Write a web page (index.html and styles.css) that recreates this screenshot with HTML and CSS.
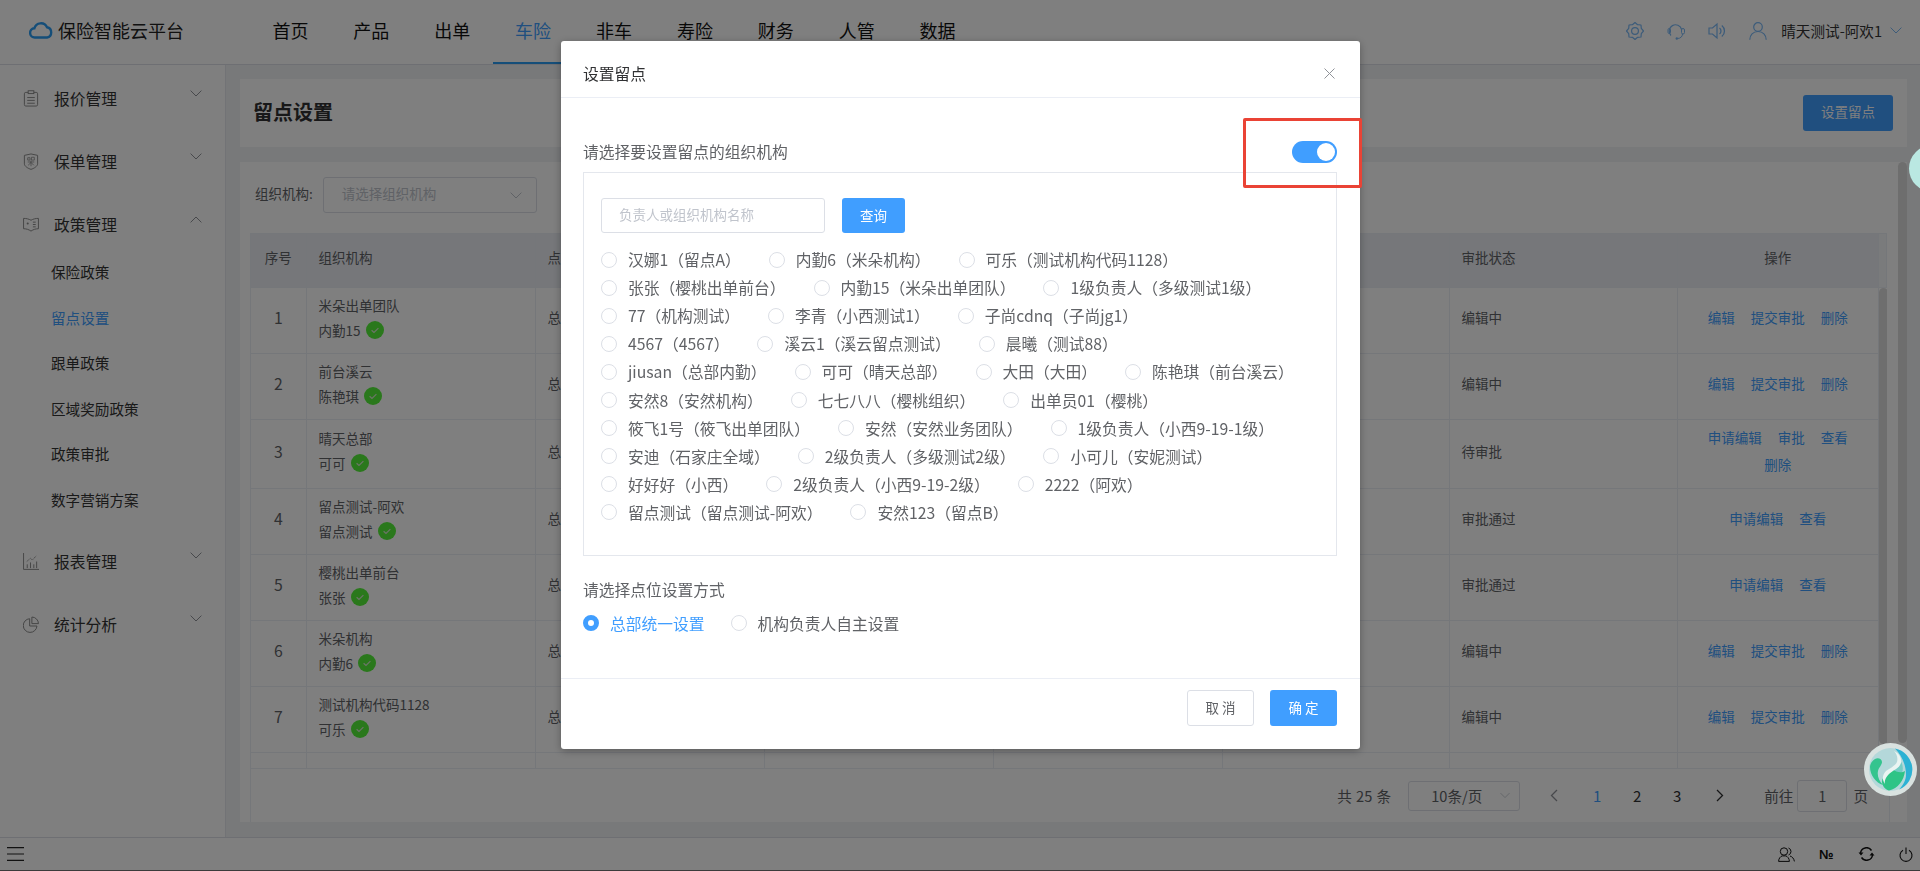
FILE: index.html
```html
<!DOCTYPE html>
<html lang="zh-CN">
<head>
  <meta charset="UTF-8" />
  <title>保险智能云平台 - 留点设置</title>
  <link rel="stylesheet" href="styles.css">
</head>
<body>
  <svg class="defs" width="0" height="0">
    <symbol id="ok" viewBox="0 0 18 18">
      <circle cx="9" cy="9" r="9" fill="#54f038"/>
      <path d="M5.600 9.200l2.400 2.300 4.400-4.400" fill="none" stroke="#d8e8d0" stroke-width="1.200"/>
    </symbol>
    <symbol id="chev" viewBox="0 0 12 7">
      <path d="M.6.6L6 6l5.400-5.400" fill="none" stroke="currentColor" stroke-width="1"/>
    </symbol>
  </svg>

  <header class="topbar">
    <div class="logo">
      <svg width="24" height="18" viewBox="0 0 24 18"><path d="M6 16.500a4.600 4.600 0 0 1-.6-9.200 6.700 6.700 0 0 1 12.600-1 5.200 5.200 0 0 1 0 10.200z" fill="none" stroke="#2b9cf2" stroke-width="2.400"/></svg>
      <span>保险智能云平台</span>
    </div>
    <nav class="nav">
      <a>首页</a><a>产品</a><a>出单</a><a class="active">车险</a><a>非车</a><a>寿险</a><a>财务</a><a>人管</a><a>数据</a>
    </nav>
    <div class="top-right">
      <svg class="top-icon" viewBox="0 0 18 18"><path d="M17.500 9L15.280 11.600 15 15 11.600 15.280 9 17.500 6.400 15.280 3 15 2.720 11.600 .5 9 2.720 6.400 3 3 6.400 2.720 9 .5 11.600 2.720 15 3 15.280 6.400z" fill="none" stroke="currentColor" stroke-width="1.200" stroke-linejoin="round"/><circle cx="9" cy="9" r="3.400" fill="none" stroke="currentColor" stroke-width="1.200"/></svg>
      <svg class="top-icon" viewBox="0 0 18 18"><path d="M4 13.500A6.300 6.300 0 1 1 14.600 7.500" fill="none" stroke="currentColor" stroke-width="1.200"/><rect x="1" y="6.500" width="2.500" height="5" rx="1.200" fill="none" stroke="currentColor"/><rect x="14.500" y="6.500" width="3" height="5.500" rx="1.500" fill="none" stroke="currentColor"/><path d="M15.500 12c0 2.500-2 4.500-5 4.500" fill="none" stroke="currentColor"/><circle cx="9.800" cy="16.500" r="1.200" fill="currentColor"/></svg>
      <svg class="top-icon" viewBox="0 0 18 18"><path d="M1 6h3.500L9 2v14l-4.500-4H1z" fill="none" stroke="currentColor" stroke-width="1.200"/><path d="M11.500 6a3.800 3.800 0 0 1 0 6M13.800 3.500a7 7 0 0 1 0 11" fill="none" stroke="currentColor" stroke-width="1.300"/></svg>
      <svg class="top-icon" viewBox="0 0 18 18"><circle cx="9" cy="5" r="4.300" fill="none" stroke="currentColor" stroke-width="1.200"/><path d="M.8 17.800c0-4.800 3.200-8.300 8.200-8.300s8.200 3.500 8.200 8.300" fill="none" stroke="currentColor" stroke-width="1.200"/></svg>
      <span class="user-name">晴天测试-阿欢1</span>
      <svg class="chev user-chev"><use href="#chev"/></svg>
    </div>
  </header>

  <div class="layout">
    <aside class="sidebar">
      <div class="menu-group">
        <div class="menu-head">
          <svg class="menu-icon" viewBox="0 0 16 18"><rect x="1" y="2.500" width="14" height="14.500" rx="1.500" fill="none" stroke="currentColor"/><rect x="5" y=".8" width="6" height="3" fill="#fff" stroke="currentColor"/><path d="M4 8h8M4 11h8M4 14h8" stroke="currentColor"/></svg>
          <span>报价管理</span>
          <svg class="chev"><use href="#chev"/></svg>
        </div>
      </div>
      <div class="menu-group">
        <div class="menu-head">
          <svg class="menu-icon" viewBox="0 0 16 18"><path d="M1 2.500L8 1l7 1.500v9c0 2.500-4 5-7 5.800-3-.8-7-3.300-7-5.800z" fill="none" stroke="currentColor"/><path d="M4.500 5h2.500v2.500H4.500zM8.500 4.500h3v3h-3zM4.500 9.500h7M8 8v6M8 10l-3 3M8 10l3 3" fill="none" stroke="currentColor" stroke-width=".8"/></svg>
          <span>保单管理</span>
          <svg class="chev"><use href="#chev"/></svg>
        </div>
      </div>
      <div class="menu-group">
        <div class="menu-head">
          <svg class="menu-icon" viewBox="0 0 17 16"><path d="M.6 1.500c3 0 5.500.6 7.900 2 2.400-1.400 4.900-2 7.900-2v11c-3 0-5.400.8-7.900 2.500C6 13.300 3.600 12.500.6 12.500z" fill="none" stroke="currentColor"/><circle cx="5" cy="7" r="1.100" fill="currentColor"/><path d="M10.500 5.500h3M10.500 8h3M10.500 10.500h3" stroke="currentColor"/></svg>
          <span>政策管理</span>
          <svg class="chev up"><use href="#chev"/></svg>
        </div>
        <a class="menu-sub">保险政策</a>
        <a class="menu-sub active">留点设置</a>
        <a class="menu-sub">跟单政策</a>
        <a class="menu-sub">区域奖励政策</a>
        <a class="menu-sub">政策审批</a>
        <a class="menu-sub">数字营销方案</a>
      </div>
      <div class="menu-group">
        <div class="menu-head">
          <svg class="menu-icon" viewBox="0 0 17 18"><path d="M.6 0v17.400H17" fill="none" stroke="currentColor"/><path d="M4 9l4-3.500 2 2L14 3" fill="none" stroke="currentColor" stroke-width=".9" stroke-dasharray="1.500 .7"/><path d="M4.500 12v4M8 10v6M11.500 12v4M14.500 9v7" stroke="currentColor"/></svg>
          <span>报表管理</span>
          <svg class="chev"><use href="#chev"/></svg>
        </div>
      </div>
      <div class="menu-group">
        <div class="menu-head">
          <svg class="menu-icon" viewBox="0 0 18 18"><path d="M7.500 2.500a7.700 7.700 0 1 0 8.200 8.200H7.500z" fill="none" stroke="currentColor" stroke-width="1.100"/><path d="M10 .6a7.500 7.500 0 0 1 7.400 7.400H10z" fill="none" stroke="currentColor" stroke-width="1.100"/></svg>
          <span>统计分析</span>
          <svg class="chev"><use href="#chev"/></svg>
        </div>
      </div>
    </aside>

    <main class="main">
      <section class="title-card">
        <h2>留点设置</h2>
        <button class="btn-primary">设置留点</button>
      </section>

      <section class="list-card">
        <div class="filter">
          <label>组织机构:</label>
          <div class="select"><span>请选择组织机构</span><svg class="chev"><use href="#chev"/></svg></div>
        </div>

        <div class="table-box">
          <table class="table head-table">
            <colgroup><col class="c1"><col class="c2"><col class="c3"><col class="c4"><col class="c5"><col class="c6"><col class="c7"><col class="c8"><col class="c9"></colgroup>
            <tr>
              <th class="center">序号</th><th>组织机构</th><th>点位设置方式</th><th></th><th></th><th></th><th>审批状态</th><th class="center">操作</th><th class="gutter"></th>
            </tr>
          </table>
          <div class="table-scroll">
            <table class="table">
              <colgroup><col class="c1"><col class="c2"><col class="c3"><col class="c4"><col class="c5"><col class="c6"><col class="c7"><col class="c8"></colgroup>
              <tr>
                <td class="center num">1</td>
                <td><div>米朵出单团队</div><div>内勤15<svg class="ok"><use href="#ok"/></svg></div></td>
                <td>总部统一设置</td><td></td><td></td><td></td><td>编辑中</td>
                <td class="center"><a>编辑</a><a>提交审批</a><a>删除</a></td>
              </tr>
              <tr>
                <td class="center num">2</td>
                <td><div>前台溪云</div><div>陈艳琪<svg class="ok"><use href="#ok"/></svg></div></td>
                <td>总部统一设置</td><td></td><td></td><td></td><td>编辑中</td>
                <td class="center"><a>编辑</a><a>提交审批</a><a>删除</a></td>
              </tr>
              <tr>
                <td class="center num">3</td>
                <td><div>晴天总部</div><div>可可<svg class="ok"><use href="#ok"/></svg></div></td>
                <td>总部统一设置</td><td></td><td></td><td></td><td>待审批</td>
                <td class="center"><a>申请编辑</a><a>审批</a><a>查看</a><a>删除</a></td>
              </tr>
              <tr>
                <td class="center num">4</td>
                <td><div>留点测试-阿欢</div><div>留点测试<svg class="ok"><use href="#ok"/></svg></div></td>
                <td>总部统一设置</td><td></td><td></td><td></td><td>审批通过</td>
                <td class="center"><a>申请编辑</a><a>查看</a></td>
              </tr>
              <tr>
                <td class="center num">5</td>
                <td><div>樱桃出单前台</div><div>张张<svg class="ok"><use href="#ok"/></svg></div></td>
                <td>总部统一设置</td><td></td><td></td><td></td><td>审批通过</td>
                <td class="center"><a>申请编辑</a><a>查看</a></td>
              </tr>
              <tr>
                <td class="center num">6</td>
                <td><div>米朵机构</div><div>内勤6<svg class="ok"><use href="#ok"/></svg></div></td>
                <td>总部统一设置</td><td></td><td></td><td></td><td>编辑中</td>
                <td class="center"><a>编辑</a><a>提交审批</a><a>删除</a></td>
              </tr>
              <tr>
                <td class="center num">7</td>
                <td><div>测试机构代码1128</div><div>可乐<svg class="ok"><use href="#ok"/></svg></div></td>
                <td>总部统一设置</td><td></td><td></td><td></td><td>编辑中</td>
                <td class="center"><a>编辑</a><a>提交审批</a><a>删除</a></td>
              </tr>
              <tr>
                <td class="center num"></td>
                <td><div>晴天总部</div></td>
                <td></td><td></td><td></td><td></td><td></td>
                <td></td>
              </tr>
            </table>
            <div class="thumb"></div>
          </div>
          <div class="pager">
            <span class="total">共 25 条</span>
            <div class="page-size"><span>10条/页</span><svg class="chev"><use href="#chev"/></svg></div>
            <span class="page-btn muted">
              <svg width="8" height="13" viewBox="0 0 8 13"><path d="M7 1L1.500 6.500 7 12" fill="none" stroke="currentColor" stroke-width="1.300"/></svg>
            </span>
            <span class="page-btn current">1</span>
            <span class="page-btn">2</span>
            <span class="page-btn">3</span>
            <span class="page-btn">
              <svg width="8" height="13" viewBox="0 0 8 13"><path d="M1 1l5.500 5.500L1 12" fill="none" stroke="currentColor" stroke-width="1.300"/></svg>
            </span>
            <span class="jump">前往</span>
            <span class="jump-input">1</span>
            <span class="jump-unit">页</span>
          </div>
        </div>
        <div class="thumb-outer"></div>
      </section>
    </main>
  </div>

  <footer class="bottombar">
    <svg width="17" height="14" viewBox="0 0 17 14"><path d="M0 .6h17M0 7h17M0 13.400h17" stroke="#222" stroke-width="1.100"/></svg>
    <div class="bottom-tools">
      <svg width="17" height="15" viewBox="0 0 17 15"><circle cx="6" cy="4.500" r="3.700" fill="none" stroke="#111"/><path d="M.6 14.400c0-3 2-5 3.500-5.500h3.800c1.500.5 3.500 2.500 3.500 5.500zM10.500 1a3.700 3.700 0 0 1 0 7M12 9c2 .5 4 2.500 4.400 5.400" fill="none" stroke="#111"/></svg>
      <span class="no-sign">№</span>
      <svg width="17" height="14" viewBox="0 0 17 14"><path d="M2.500 6a6 6 0 0 1 11-2.500M14.500 8a6 6 0 0 1-11 2.500" fill="none" stroke="#111" stroke-width="1.500"/><path d="M.5 5.500h5L3 8.500zM16.500 8.500h-5L14 5.500z" fill="#111"/></svg>
      <svg width="14" height="15" viewBox="0 0 14 15"><path d="M4 3.200a6 6 0 1 0 6 0M7 .5v6.500" fill="none" stroke="#111" stroke-width="1.100"/></svg>
    </div>
  </footer>

  <div class="mask"></div>

  <div class="side-ball"></div>
  <svg class="float-logo" width="53" height="53" viewBox="0 0 53 53">
    <circle cx="26.500" cy="26.500" r="26.500" fill="#d9e2e0"/>
    <circle cx="26.500" cy="26.500" r="21.500" fill="#b4d8da"/>
    <path d="M31 5.500a21.500 21.500 0 0 1 4 41c4-4 7-9 7-15 0-9-4-19-11-26z" fill="#2cb2d4"/>
    <path d="M36 17c3 4 4 10 1 15-2 3-5 4-9 3-2-3-3-7-1-10 4-1 8-3 9-8z" fill="#74ccc4"/>
    <path d="M28 26c5 4 10 4 13 2-1 9-7 18-16 19.500-4-1-7-5-7-9 0-6 8-7 10-12.500z" fill="#2ec486"/>
    <path d="M30 8c6 3 8 8 7 12-2 6-8 7-12 11-3 3-5 7-4 10-3-4-3-9 1-13 4-3 9-5 11-9 1-4 0-8-3-11z" fill="#eaf4f2"/>
    <path d="M11 16c3-2 7 0 7 3s-3 5-4 9c-1 5 1 10 5 14-7-2-13-10-13-18 0-3 2-6 5-8z" fill="#34c48e"/>
  </svg>

  <div class="dialog">
    <div class="dialog-head">
      <span>设置留点</span>
      <svg width="11" height="11" viewBox="0 0 11 11"><path d="M.5.500l10 10M10.500.500l-10 10" stroke="#909399"/></svg>
    </div>
    <div class="dialog-body">
      <div class="field-head">
        <span>请选择要设置留点的组织机构</span>
        <span class="switch"></span>
      </div>
      <div class="org-box">
        <div class="search-row">
          <div class="search-input">负责人或组织机构名称</div>
          <button class="btn-search">查询</button>
        </div>
        <div class="radio-row">
          <label class="radio"><i></i>汉娜1（留点A）</label>
          <label class="radio"><i></i>内勤6（米朵机构）</label>
          <label class="radio"><i></i>可乐（测试机构代码1128）</label>
        </div>
        <div class="radio-row">
          <label class="radio"><i></i>张张（樱桃出单前台）</label>
          <label class="radio"><i></i>内勤15（米朵出单团队）</label>
          <label class="radio"><i></i>1级负责人（多级测试1级）</label>
        </div>
        <div class="radio-row">
          <label class="radio"><i></i>77（机构测试）</label>
          <label class="radio"><i></i>李青（小西测试1）</label>
          <label class="radio"><i></i>子尚cdnq（子尚jg1）</label>
        </div>
        <div class="radio-row">
          <label class="radio"><i></i>4567（4567）</label>
          <label class="radio"><i></i>溪云1（溪云留点测试）</label>
          <label class="radio"><i></i>晨曦（测试88）</label>
        </div>
        <div class="radio-row">
          <label class="radio"><i></i>jiusan（总部内勤）</label>
          <label class="radio"><i></i>可可（晴天总部）</label>
          <label class="radio"><i></i>大田（大田）</label>
          <label class="radio"><i></i>陈艳琪（前台溪云）</label>
        </div>
        <div class="radio-row">
          <label class="radio"><i></i>安然8（安然机构）</label>
          <label class="radio"><i></i>七七八八（樱桃组织）</label>
          <label class="radio"><i></i>出单员01（樱桃）</label>
        </div>
        <div class="radio-row">
          <label class="radio"><i></i>筱飞1号（筱飞出单团队）</label>
          <label class="radio"><i></i>安然（安然业务团队）</label>
          <label class="radio"><i></i>1级负责人（小西9-19-1级）</label>
        </div>
        <div class="radio-row">
          <label class="radio"><i></i>安迪（石家庄全域）</label>
          <label class="radio"><i></i>2级负责人（多级测试2级）</label>
          <label class="radio"><i></i>小可儿（安妮测试）</label>
        </div>
        <div class="radio-row">
          <label class="radio"><i></i>好好好（小西）</label>
          <label class="radio"><i></i>2级负责人（小西9-19-2级）</label>
          <label class="radio"><i></i>2222（阿欢）</label>
        </div>
        <div class="radio-row">
          <label class="radio"><i></i>留点测试（留点测试-阿欢）</label>
          <label class="radio"><i></i>安然123（留点B）</label>
        </div>
      </div>
      <div class="field-title">请选择点位设置方式</div>
      <div class="mode-row">
        <label class="radio checked"><i></i>总部统一设置</label>
        <label class="radio"><i></i>机构负责人自主设置</label>
      </div>
    </div>
    <div class="dialog-foot">
      <button class="btn-cancel">取消</button>
      <button class="btn-ok">确定</button>
    </div>
  </div>

  <div class="red-mark"></div>
</body>
</html>
```

FILE: styles.css
```css
* {
  box-sizing: border-box;
}
html, body {
  height: 100%;
}
body {
  margin: 0;
  display: flex;
  flex-direction: column;
  overflow: hidden;
  background-color: #f0f2f5;
  color: #303133;
  font-family: "Noto Sans CJK SC", "Noto Sans", sans-serif;
  font-size: 13.5px;
}
.defs {
  position: absolute;
}
button {
  font-family: inherit;
  border: none;
  padding: 0 0 2px;
}

/* Top bar */
.topbar {
  height: 65px;
  flex: none;
  display: flex;
  align-items: center;
  background-color: #fff;
  border-bottom: 1px solid #dcdfe6;
}
.logo {
  width: 250px;
  padding: 0 0 5px 29px;
  display: flex;
  align-items: center;
  gap: 5px;
  font-size: 18px;
  color: #222;
}
.nav {
  display: flex;
  height: 64px;
}
.nav a {
  width: 80.9px;
  line-height: 61px;
  text-align: center;
  font-size: 18px;
  color: #111;
}
.nav a.active {
  color: #409eff;
  border-bottom: 2px solid #2b9cf2;
}
.top-right {
  margin-left: auto;
  padding: 0 18px 3px 0;
  display: flex;
  align-items: center;
  color: #7ab8f5;
}
.top-icon {
  width: 18px;
  height: 18px;
  margin-right: 23px;
}
.top-icon:nth-child(4) {
  margin-right: 14px;
}
.user-name {
  font-size: 14.6px;
  color: #333;
}
.chev {
  width: 12px;
  height: 7px;
  color: #909399;
}
.user-chev {
  margin-left: 8px;
  color: #7ab8f5;
}

/* Left menu */
.layout {
  flex: 1;
  min-height: 0;
  display: flex;
}
.sidebar {
  width: 226px;
  flex: none;
  padding-top: 10px;
  background-color: #fff;
  border-right: 1px solid #e4e7ed;
}
.menu-group {
  margin-bottom: 13px;
}
.menu-head {
  height: 50px;
  display: flex;
  align-items: center;
  padding: 0 0 3px 23px;
  font-size: 15.75px;
  color: #333;
}
.menu-head span {
  margin-left: 15px;
  width: 136px;
}
.menu-head .chev {
  margin-top: -11px;
}
.menu-head .chev.up {
  transform: rotate(180deg);
}
.menu-icon {
  width: 16px;
  height: 17px;
  flex: none;
  color: #888;
}
.menu-sub {
  display: block;
  height: 45.6px;
  line-height: 42.6px;
  padding-left: 51px;
  font-size: 14.6px;
  color: #333;
}
.menu-sub.active {
  color: #409eff;
}

/* Main content */
.main {
  flex: 1;
  min-width: 0;
  padding: 14px 13px 15px 14px;
  display: flex;
  flex-direction: column;
  gap: 15px;
}
.title-card {
  height: 68px;
  flex: none;
  display: flex;
  align-items: center;
  justify-content: space-between;
  padding: 0 14px 0 13px;
  background-color: #fff;
}
.title-card h2 {
  margin: 0;
  padding-bottom: 3px;
  font-size: 20px;
  font-weight: bold;
  color: #303133;
}
.btn-primary {
  width: 90px;
  height: 36px;
  padding-bottom: 4px;
  border-radius: 3px;
  background-color: #409eff;
  color: #fff;
  font-size: 13.5px;
}
.list-card {
  flex: 1;
  min-height: 0;
  position: relative;
  padding: 15px 17px 0 10px;
  background-color: #fff;
  display: flex;
  flex-direction: column;
}
.filter {
  display: flex;
  align-items: center;
  gap: 10px;
  padding-left: 5px;
  margin-bottom: 20px;
  color: #606266;
}
.filter label {
  padding-bottom: 4px;
}
.select {
  width: 214px;
  height: 36px;
  display: flex;
  align-items: center;
  justify-content: space-between;
  padding: 0 14px 4px 18px;
  border: 1px solid #dcdfe6;
  border-radius: 3px;
  color: #c0c4cc;
}
.select .chev {
  margin-top: 4px;
  color: #c0c4cc;
}
.table-box {
  flex: 1;
  min-height: 0;
  margin-right: 3px;
  display: flex;
  flex-direction: column;
}
.table {
  width: 1628.5px;
  table-layout: fixed;
  border-collapse: separate;
  border-spacing: 0;
  color: #606266;
  font-size: 13.5px;
}
.c1 { width: 56.5px; }
.c2, .c3, .c4, .c5 { width: 229px; }
.c6 { width: 227px; }
.c7 { width: 228.5px; }
.c8 { width: 200.5px; }
.c9 { width: 8.5px; }
.table th, .table td {
  border-right: 1px solid #ebeef5;
  border-bottom: 1px solid #ebeef5;
  text-align: left;
  font-weight: normal;
}
.table th {
  height: 55px;
  padding: 3px 12px 11px;
  background-color: #eceff5;
  border-top: 1px solid #ebeef5;
}
.table td {
  height: 66px;
  padding: 4px 12px 10px;
  line-height: 25px;
}
.table th:first-child, .table td:first-child {
  border-left: 1px solid #ebeef5;
}
.table .center {
  text-align: center;
}
.table .num {
  font-size: 15.75px;
}
.table a {
  display: inline-block;
  margin: 0 8px;
  line-height: 27px;
  color: #409eff;
}
.head-table {
  flex: none;
  width: 1637px;
}
.head-table .gutter {
  padding: 0;
  background-color: #f5f6f8;
}
.table-scroll {
  height: 480px;
  flex: none;
  overflow: hidden;
  position: relative;
}
.ok {
  width: 18px;
  height: 18px;
  margin-left: 5px;
  vertical-align: -3px;
}
.thumb {
  position: absolute;
  top: 0;
  left: 1628.5px;
  width: 9px;
  height: 456px;
  border-radius: 5px;
  background-color: #ddd;
}
.thumb-outer {
  position: absolute;
  top: 0;
  right: 0;
  width: 9px;
  height: 581px;
  border-radius: 5px;
  background-color: #ddd;
}
.pager {
  flex: 1;
  margin-right: -3px;
  display: flex;
  align-items: center;
  justify-content: flex-end;
  padding: 0 21px 0 0;
  border: 1px solid #ebeef5;
  border-width: 1px 1px 0;
  font-size: 14.6px;
  color: #606266;
}
.total {
  margin-right: 17px;
  word-spacing: 1px;
}
.page-size {
  width: 112px;
  height: 30px;
  margin-right: 14px;
  display: flex;
  align-items: center;
  justify-content: space-between;
  padding: 0 9px 0 22px;
  border: 1px solid #dcdfe6;
  border-radius: 3px;
}
.page-size .chev {
  width: 10px;
  color: #c0c4cc;
}
.page-btn {
  width: 40px;
  text-align: center;
  font-size: 15px;
  color: #303133;
}
.page-btn.muted {
  color: #909399;
  margin-right: 3px;
}
.page-btn.current {
  color: #409eff;
}
.page-btn:nth-child(7) {
  margin-left: 3px;
}
.jump {
  margin-left: 24px;
}
.jump-input {
  width: 50px;
  height: 32px;
  margin: 0 6px 0 4px;
  line-height: 30px;
  text-align: center;
  border: 1px solid #dcdfe6;
  border-radius: 3px;
}

/* Bottom bar */
.bottombar {
  height: 34px;
  flex: none;
  display: flex;
  align-items: center;
  justify-content: space-between;
  padding: 0 7px;
  background-color: #fff;
  border-top: 1px solid #dcdfe6;
  border-bottom: 1px solid #777;
}
.bottom-tools {
  display: flex;
  align-items: center;
  gap: 24px;
}
.no-sign {
  width: 15px;
  font-family: "Liberation Sans", sans-serif;
  font-size: 13px;
  font-weight: bold;
  color: #111;
}

/* Modal */
.mask {
  position: fixed;
  inset: 0;
  background-color: rgba(0, 0, 0, 0.5);
}
.side-ball {
  position: fixed;
  left: 1909px;
  top: 145px;
  width: 47px;
  height: 47px;
  border-radius: 50%;
  background-color: #bae8e2;
}
.float-logo {
  position: fixed;
  left: 1864px;
  top: 743px;
}
.dialog {
  position: fixed;
  left: 561px;
  top: 41px;
  width: 799px;
  height: 708px;
  display: flex;
  flex-direction: column;
  background-color: #fff;
  border-radius: 3px;
  box-shadow: 0 2px 8px rgba(0, 0, 0, 0.3);
}
.dialog-head {
  height: 57px;
  flex: none;
  display: flex;
  align-items: center;
  justify-content: space-between;
  padding: 9px 25px 0 22px;
  border-bottom: 1px solid #ebeef5;
  font-size: 15.75px;
  color: #303133;
}
.dialog-body {
  flex: 1;
  padding: 34px 23px 0 22px;
  font-size: 15.75px;
  color: #606266;
}
.field-head {
  height: 40px;
  display: flex;
  justify-content: space-between;
  align-items: center;
}
.field-head span:first-child {
  padding-bottom: 1px;
}
.switch {
  position: relative;
  width: 45px;
  height: 22px;
  margin-top: -1px;
  border-radius: 11px;
  background-color: #409eff;
}
.switch::after {
  content: "";
  position: absolute;
  right: 2px;
  top: 2px;
  width: 18px;
  height: 18px;
  border-radius: 50%;
  background-color: #fff;
}
.org-box {
  height: 384px;
  padding: 25px 17px 0;
  border: 1px solid #e4e7ed;
}
.search-row {
  display: flex;
  gap: 17px;
  margin-bottom: 12.5px;
}
.search-input {
  width: 224px;
  height: 35px;
  line-height: 31px;
  padding-left: 17px;
  border: 1px solid #dcdfe6;
  border-radius: 3px;
  font-size: 13.5px;
  color: #c0c4cc;
}
.btn-search {
  width: 63px;
  height: 35px;
  border-radius: 3px;
  background-color: #409eff;
  color: #fff;
  font-size: 13.5px;
}
.radio-row {
  height: 28.1px;
  display: flex;
  align-items: center;
  gap: 28px;
}
.radio {
  display: flex;
  align-items: center;
  gap: 11px;
  white-space: nowrap;
}
.radio i {
  width: 16px;
  height: 16px;
  flex: none;
  border: 1px solid #dcdfe6;
  border-radius: 50%;
}
.radio.checked {
  color: #409eff;
}
.radio.checked i {
  border: 5px solid #409eff;
}
.field-title {
  height: 24px;
  line-height: 22px;
  margin-top: 23px;
}
.mode-row {
  height: 24px;
  margin-top: 8px;
  display: flex;
  align-items: center;
  gap: 26px;
}
.dialog-foot {
  height: 71px;
  flex: none;
  display: flex;
  justify-content: flex-end;
  gap: 16px;
  padding: 11px 23px 0 0;
  border-top: 1px solid #ebeef5;
}
.btn-cancel, .btn-ok {
  width: 67px;
  height: 36px;
  border-radius: 3px;
  font-size: 13.5px;
  letter-spacing: 3px;
  padding-left: 3px;
}
.btn-cancel {
  background-color: #fff;
  border: 1px solid #dcdfe6;
  color: #606266;
}
.btn-ok {
  background-color: #409eff;
  color: #fff;
}
.red-mark {
  position: fixed;
  left: 1243px;
  top: 118px;
  width: 119px;
  height: 70px;
  border: 3px solid #ea4335;
  border-radius: 2px;
}
```
